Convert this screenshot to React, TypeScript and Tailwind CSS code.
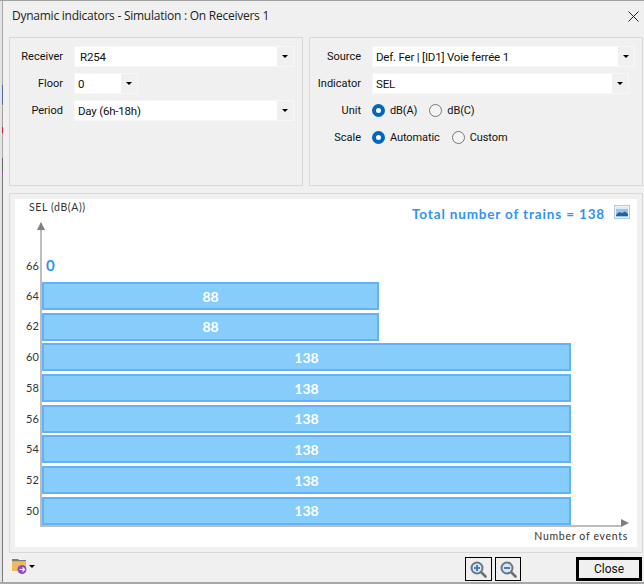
import React from "react";

const ctl = { fontFamily: 'Roboto,"Open Sans",sans-serif' };

function Combo({ value, w, pl = "pl-[3px]" }: { value: string; w: string; pl?: string }) {
  return (
    <div className={`h-[21px] bg-white flex items-center border border-[#f7f7f7] ${w}`}>
      <span className={`flex-1 ${pl} pt-[2px] text-[11.5px] text-[#111] whitespace-nowrap tracking-[-0.2px]`} style={ctl}>{value}</span>
      <span className="w-[16px] h-[19px] bg-[#f0f0f0] flex items-center justify-center">
        <span className="w-0 h-0 border-l-[3px] border-r-[3px] border-t-[3px] border-l-transparent border-r-transparent border-t-black" />
      </span>
    </div>
  );
}

function Row({ label, labelW, children }: { label: string; labelW: string; children: React.ReactNode }) {
  return (
    <div className="flex items-center h-[21px] mb-[6px]">
      <span className={`${labelW} text-right pt-[2px] text-[11px] text-[#111] pr-[11px]`} style={ctl}>{label}</span>
      {children}
    </div>
  );
}

function Radio({ label, on, mr }: { label: string; on?: boolean; mr: string }) {
  return (
    <div className={`flex items-center ${mr}`}>
      <span
        className={`w-[13px] h-[13px] rounded-full mr-[5px] ${
          on ? "border-[4px] border-[#0067c0] bg-white" : "border border-[#767676] bg-[#f4f4f4]"
        }`}
      />
      <span className="text-[11px] pt-[2px] text-[#111] tracking-[-0.1px]" style={ctl}>{label}</span>
    </div>
  );
}

const bars = [
  { y: "64", n: 88, w: "w-[337px]" },
  { y: "62", n: 88, w: "w-[337px]" },
  { y: "60", n: 138, w: "w-[529px]" },
  { y: "58", n: 138, w: "w-[529px]" },
  { y: "56", n: 138, w: "w-[529px]" },
  { y: "54", n: 138, w: "w-[529px]" },
  { y: "52", n: 138, w: "w-[529px]" },
  { y: "50", n: 138, w: "w-[529px]" },
];

const strip = [
  { h: "h-[85px]", c: "bg-[#a8a8a8]" },
  { h: "h-[20px]", c: "bg-[#4f6ea8]" },
  { h: "h-[2px]", c: "bg-[#b8b070]" },
  { h: "h-[20px]", c: "bg-[#a89a9a]" },
  { h: "h-[6px]", c: "bg-[#d02020]" },
  { h: "h-[25px]", c: "bg-[#a8a8a8]" },
  { h: "h-[14px]", c: "bg-[#666666]" },
  { h: "h-[3px]", c: "bg-[#a050a8]" },
  { h: "h-[409px]", c: "bg-[#7a7a7a]" },
];

export default function App() {
  return (
    <div className="w-[644px] h-[584px] bg-[#f0f0f0] overflow-hidden relative" style={{ fontFamily: '"Open Sans","Noto Sans",sans-serif' }}>
      <div className="absolute left-0 top-0 bottom-0 w-[2px] bg-[#e4e4e4]" />
      <div className="absolute left-[2px] top-0 bottom-0 w-px flex flex-col">
        {strip.map((s, i) => (
          <div key={i} className={`${s.h} ${s.c} w-px`} />
        ))}
      </div>
      <div className="absolute left-0 right-0 top-0 h-px bg-[#a0a0a0]" />
      <div className="absolute left-0 right-0 bottom-0 h-[2px] bg-[#a8a8a8]" />

      <div className="pl-[9px] pr-[1px] h-full flex flex-col">
        <div className="h-[37px] flex items-center justify-between pl-[3px] pr-[4px] pb-[7px] pt-[1px]">
          <span className="text-[12px] text-[#222] tracking-[-0.25px]">Dynamic indicators - Simulation : On Receivers 1</span>
          <svg width="11" height="11" viewBox="0 0 11 11" className="mt-[1px]">
            <path d="M0.5 0.5 L10.5 10.5 M10.5 0.5 L0.5 10.5" stroke="#222" strokeWidth="1" fill="none" />
          </svg>
        </div>

        <div className="flex gap-[6px] h-[149px]">
          <div className="w-[294px] border border-[#d9d9d9] pt-[8px] pl-[5px]">
            <Row label="Receiver" labelW="w-[59px]">
              <Combo value="R254" w="w-[220px]" pl="pl-[5px]" />
            </Row>
            <Row label="Floor" labelW="w-[59px]">
              <Combo value="0" w="w-[64px]" />
            </Row>
            <Row label="Period" labelW="w-[59px]">
              <Combo value="Day (6h-18h)" w="w-[220px]" />
            </Row>
          </div>
          <div className="flex-1 border border-[#d9d9d9] pt-[8px] pl-[2px]">
            <Row label="Source" labelW="w-[60px]">
              <Combo value="Def. Fer | [ID1] Voie ferrée 1" w="w-[263px]" />
            </Row>
            <Row label="Indicator" labelW="w-[60px]">
              <Combo value="SEL" w="w-[257px]" />
            </Row>
            <Row label="Unit" labelW="w-[60px]">
              <Radio label="dB(A)" on mr="mr-[12px]" />
              <Radio label="dB(C)" mr="" />
            </Row>
            <Row label="Scale" labelW="w-[60px]">
              <Radio label="Automatic" on mr="mr-[12px]" />
              <Radio label="Custom" mr="" />
            </Row>
          </div>
        </div>

        <div className="mt-[7px] h-[360px] border border-[#d9d9d9] pl-[5px] pt-[5px] pr-[5px]">
          <div className="relative bg-white h-[348px] pt-[1px] pl-[14px]" style={{ fontFamily: 'Lato,"Open Sans",sans-serif' }}>
            <div className="flex justify-between items-start h-[22px]">
              <span className="text-[10.5px] text-[#333] tracking-[0.6px]">SEL (dB(A))</span>
              <div className="flex items-start pr-[7px]">
                <span className="text-[13.5px] font-bold text-[#2f93f5] tracking-[0.85px] mt-[4px] mr-[9px]">Total number of trains = 138</span>
                <svg width="16" height="14" viewBox="0 0 16 14" className="mt-[5px]">
                  <rect x="0.5" y="0.5" width="15" height="13" fill="#eef4fb" stroke="#b8c8dc" />
                  <rect x="2" y="2" width="12" height="10" fill="#9cc3ea" />
                  <path d="M2 10 L5 7 L8 8 L11 6.5 L14 9 V11 H2Z" fill="#2b5f99" />
                  <rect x="2" y="2" width="12" height="2" fill="#dcebf9" />
                </svg>
              </div>
            </div>

            <div className="ml-[11px] relative w-[590px]">
              <div className="absolute left-[0px] top-[1px] w-[2px] h-[303px] bg-[#bdbdbd]" />
              <div className="absolute left-[-3px] top-[0px] w-0 h-0 border-l-[4px] border-r-[4px] border-b-[8px] border-l-transparent border-r-transparent border-b-[#7f7f7f]" />
              <div className="h-[31px]" />
              <div className="h-[29px] flex items-start relative">
                <span className="absolute left-[-14px] top-[5px] text-[11px] text-[#333]">66</span>
                <span className="ml-[6px] mt-[1px] text-[15px] font-bold text-[#2f93f5]">0</span>
              </div>
              <div className="flex flex-col gap-[2.7px]">
                {bars.map((b) => (
                  <div key={b.y} className="h-[28px] flex items-center relative">
                    <span className="absolute left-[-14px] text-[11px] text-[#333]">{b.y}</span>
                    <div
                      className={`${b.w} ml-[2px] h-full bg-[#87cdfb] border-2 border-[#64b1f9] flex items-center justify-center text-white font-bold text-[14px]`}
                    >
                      {b.n}
                    </div>
                  </div>
                ))}
              </div>
              <div className="h-[2px] w-[581px] bg-[#bdbdbd]" />
              <div className="absolute left-[581px] top-[297px] w-0 h-0 border-t-[4px] border-b-[4px] border-l-[8px] border-t-transparent border-b-transparent border-l-[#7f7f7f]" />
              <div className="text-right pr-[2px] mt-[2px] text-[10.5px] text-[#333] tracking-[0.7px]">Number of events</div>
            </div>
          </div>
        </div>

        <div className="flex items-start flex-1 pt-[4px] pr-[1px]">
          <svg width="16" height="16" viewBox="0 0 16 16" className="ml-[3px] mt-[1px]">
            <path d="M0 1 H6 L7 2 H14 V3.5 H0Z" fill="#7a7a7a" />
            <rect x="0" y="4" width="14" height="9" fill="#f0b960" />
            <circle cx="10" cy="11.5" r="4.5" fill="#8e4fb5" />
            <path d="M7.5 11.5 H12.5 M10.5 9.5 L12.5 11.5 L10.5 13.5" stroke="#fff" strokeWidth="1.2" fill="none" />
          </svg>
          <span className="ml-[1px] mt-[8px] w-0 h-0 border-l-[3px] border-r-[3px] border-t-[3px] border-l-transparent border-r-transparent border-t-black" />
          <div className="flex-1" />
          <button className="w-[27px] h-[24px] border border-black flex items-center justify-center mr-[3px]">
            <Zoom plus />
          </button>
          <button className="w-[26px] h-[24px] border border-black flex items-center justify-center mr-[55px] bg-transparent">
            <Zoom />
          </button>
          <button className="w-[66px] h-[24px] border-[3px] border-black flex items-center justify-center text-[12px] text-[#111]" style={ctl}>Close</button>
        </div>
      </div>
    </div>
  );
}

function Zoom({ plus }: { plus?: boolean }) {
  return (
    <svg width="17" height="17" viewBox="0 0 17 17">
      <path d="M11 11 L15.5 15.5" stroke="#6f6f6f" strokeWidth="2.6" strokeLinecap="round" />
      <circle cx="7" cy="7" r="5.5" fill="#dbe8f4" stroke="#6b7682" strokeWidth="2" />
      <path d="M4 7 H10" stroke="#3f7fc4" strokeWidth="2" />
      {plus && <path d="M7 4 V10" stroke="#3f7fc4" strokeWidth="2" />}
    </svg>
  );
}
